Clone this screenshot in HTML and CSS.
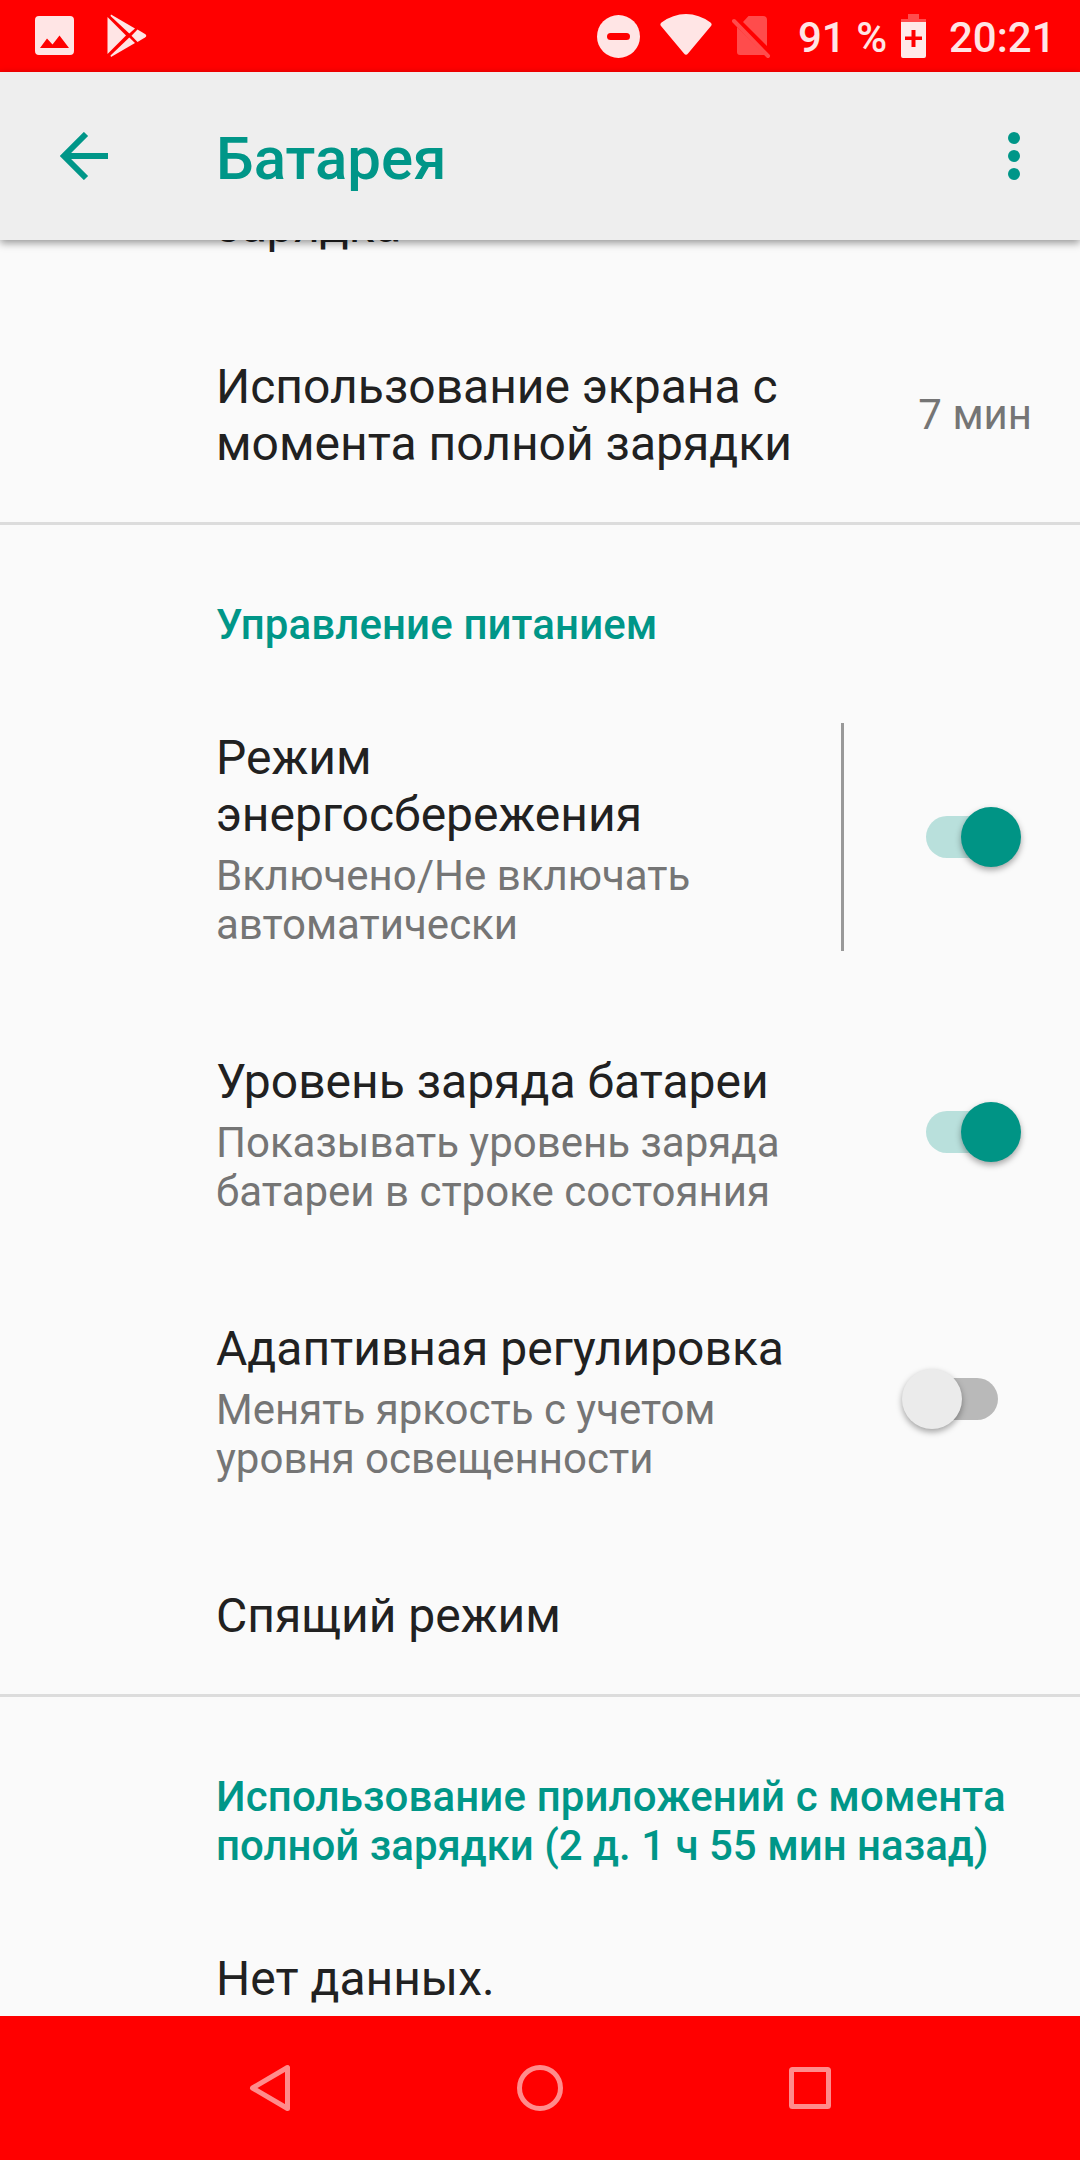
FILE: index.html
```html
<!DOCTYPE html>
<html lang="ru">
<head>
    <meta charset="utf-8">
    <title>Батарея</title>
    <link rel="stylesheet" href="styles.css">
</head>
<body>
    <div class="status-bar">
        <svg class="status-photo" width="39" height="39" viewBox="0 0 39 39">
            <path fill="#ffe5e5" fill-rule="evenodd" d="M4 0H35a4 4 0 0 1 4 4V35a4 4 0 0 1-4 4H4a4 4 0 0 1-4-4V4a4 4 0 0 1 4-4ZM5 32H34L24.500 19.500L17.500 28.500L12 22.500Z"/>
        </svg>
        <svg class="status-play" width="40" height="44" viewBox="0 0 40 44">
            <g fill="#ffe5e5">
                <path d="M.500 3L19 21.500L.500 40Z"/>
                <path d="M4 .500L28 14.500L22.300 19.500L3.500 2Z"/>
                <path d="M4 43L28 29L22.300 23.500L3.500 41.500Z"/>
                <path d="M30.500 15.500L38 20q2.500 1.500 0 3.500L30.500 28L24.500 21.800Z"/>
            </g>
        </svg>
        <svg class="status-dnd" width="43" height="43" viewBox="0 0 43 43">
            <circle cx="21.500" cy="21.500" r="21.500" fill="#ffe5e5"/>
            <rect x="10" y="18" width="23" height="7" rx="3.500" fill="#f00"/>
        </svg>
        <svg class="status-wifi" width="52" height="42" viewBox="0 0 52 42">
            <path fill="#ffe5e5" d="M1.500 8.500Q13 0 26 0T50.500 8.500Q52.500 10 51 12L28 39.500Q26 42 24 39.500L1 12Q-.500 10 1.500 8.500Z"/>
        </svg>
        <svg class="status-sim" width="40" height="44" viewBox="0 0 40 44">
            <path fill="#ff4c4c" d="M16.500 1H31q4 0 4 4V31L11 7ZM5 12L33.500 40H8q-3 0-3-3Z"/>
            <path stroke="#ff4c4c" stroke-width="4" stroke-linecap="round" d="M2 6L36 41"/>
        </svg>
        <span class="status-percent">91 %</span>
        <svg class="status-battery" width="25" height="44" viewBox="0 0 25 44">
            <path fill="#ff4c4c" d="M7 0H18V5H25V9H0V5H7Z"/>
            <path fill="#ffe9e9" fill-rule="evenodd" d="M0 8H25V42q0 2-2 2H2q-2 0-2-2ZM10.500 16V22.500H4V26H10.500V33H14.500V26H21V22.500H14.500V16Z"/>
        </svg>
        <span class="status-time">20:21</span>
    </div>

    <div class="toolbar">
        <svg class="back" width="48" height="48" viewBox="0 0 48 48">
            <path fill="none" stroke="#009688" stroke-width="6" d="M26 2L4 24L26 46M4 24H48"/>
        </svg>
        <h1>Батарея</h1>
        <svg class="more" width="12" height="48" viewBox="0 0 12 48">
            <g fill="#009688">
                <circle cx="6" cy="6" r="6"/>
                <circle cx="6" cy="24" r="6"/>
                <circle cx="6" cy="42" r="6"/>
            </g>
        </svg>
    </div>

    <div class="content">
        <div class="row row-cut">
            <div class="title">зарядка</div>
        </div>
        <div class="row row-screen">
            <div class="title">Использование экрана с<br>момента полной зарядки</div>
            <div class="value">7 мин</div>
        </div>
        <hr>
        <h2 class="category"><span class="wide">Управление питанием</span></h2>
        <div class="row row-saver">
            <div class="text">
                <div class="title">Режим<br>энергосбережения</div>
                <div class="summary">Включено/Не включать<br>автоматически</div>
            </div>
            <div class="separator"></div>
            <div class="switch on"><div class="thumb"></div></div>
        </div>
        <div class="row row-level">
            <div class="text">
                <div class="title">Уровень заряда батареи</div>
                <div class="summary">Показывать уровень заряда<br>батареи в строке состояния</div>
            </div>
            <div class="switch on"><div class="thumb"></div></div>
        </div>
        <div class="row row-adaptive">
            <div class="text">
                <div class="title">Адаптивная регулировка</div>
                <div class="summary">Менять яркость с учетом<br>уровня освещенности</div>
            </div>
            <div class="switch off"><div class="thumb"></div></div>
        </div>
        <div class="row row-sleep">
            <div class="title">Спящий режим</div>
        </div>
        <hr>
        <h2 class="category"><span class="wide">Использование приложений с момента</span><br>полной зарядки (2 д. 1 ч 55 мин назад)</h2>
        <div class="row row-empty">
            <div class="title">Нет данных.</div>
        </div>
    </div>

    <div class="nav-bar">
        <svg width="48" height="48" viewBox="0 0 48 48">
            <path fill="none" stroke="#ff8c8c" stroke-width="5" stroke-linejoin="round" d="M41.500 3.500V44.500L6.500 24Z"/>
        </svg>
        <svg width="48" height="48" viewBox="0 0 48 48">
            <circle cx="24" cy="24" r="20.500" fill="none" stroke="#ff8c8c" stroke-width="5"/>
        </svg>
        <svg width="48" height="48" viewBox="0 0 48 48">
            <rect x="5.500" y="5.500" width="37" height="37" rx="1" fill="none" stroke="#ff8c8c" stroke-width="5"/>
        </svg>
    </div>
</body>
</html>
```
FILE: styles.css
```css
* {
box-sizing: border-box;
}

body {
margin: 0;
width: 1080px;
height: 2160px;
display: flex;
flex-direction: column;
overflow: hidden;
font-family: Roboto, sans-serif;
background-color: #fafafa;
color: #212121;
}

svg {
display: block;
flex: none;
}

.status-bar {
height: 72px;
flex: none;
display: flex;
align-items: flex-start;
padding-left: 35px;
background-color: #f00;
color: #ffe5e5;
font-size: 42px;
line-height: 49px;
font-weight: 500;
white-space: nowrap;
}

.status-photo {
margin-top: 16px;
}

.status-play {
margin: 14px 0 0 33px;
}

.status-dnd {
margin: 15px 0 0 450px;
}

.status-wifi {
margin: 14px 0 0 20px;
}

.status-sim {
margin: 15px 0 0 20px;
}

.status-percent {
margin: 13px 0 0 26px;
width: 91px;
}

.status-battery {
margin: 14px 0 0 12px;
}

.status-time {
margin: 13px 0 0 23px;
}

.toolbar {
position: relative;
z-index: 2;
height: 168px;
flex: none;
display: flex;
align-items: center;
padding: 0 60px;
background-color: #eee;
box-shadow: 0 3px 8px rgba(0, 0, 0, 0.4);
}

.toolbar h1 {
margin: 5px 0 0 108px;
flex: 1;
font-size: 60px;
line-height: 70px;
font-weight: 500;
color: #009688;
}

/* list is scrolled, its first row is partly under the toolbar */
.content {
height: 1776px;
flex: none;
overflow: hidden;
}

.row {
display: flex;
align-items: center;
padding: 0 48px 0 216px;
}

.row-cut {
height: 70px;
align-items: flex-start;
}

.row-cut .title {
margin-top: -43px;
}

.row-screen {
height: 212px;
padding-bottom: 2px;
}

.row-screen .title {
flex: 1;
}

.title {
font-size: 48px;
line-height: 57px;
}

.summary {
margin-top: 8px;
font-size: 42px;
line-height: 49px;
color: #757575;
}

.value {
margin-bottom: 1px;
font-size: 42px;
line-height: 49px;
color: #757575;
}

.text {
flex: 1;
padding-top: 4px;
}

.row-level .text,
.row-adaptive .text {
padding-top: 6px;
}

hr {
margin: 0;
height: 3px;
border: none;
background-color: #dcdcdc;
}

.category {
margin: 0;
padding: 75px 48px 27px 216px;
font-size: 42px;
line-height: 49px;
font-weight: 500;
color: #009688;
white-space: nowrap;
}

.wide {
letter-spacing: 0.12px;
}

.row-saver {
height: 322px;
}

.separator {
width: 3px;
height: 228px;
margin-right: 68px;
background-color: #999;
}

.row-level,
.row-adaptive {
height: 267px;
}

.row-sleep {
height: 162px;
padding-top: 5px;
}

.row-empty {
height: 119px;
padding-top: 53px;
align-items: flex-start;
}

/* switches */
.switch {
width: 120px;
height: 60px;
flex: none;
display: flex;
align-items: center;
}

.switch::before {
content: "";
width: 72px;
height: 42px;
border-radius: 21px;
}

.switch.on {
padding-left: 14px;
}

.switch.on::before {
background-color: #b9e0dc;
}

.switch.off {
margin-right: 34px;
flex-direction: row-reverse;
}

.switch.off::before {
background-color: #b9b9b9;
}

.thumb {
width: 60px;
height: 60px;
border-radius: 50%;
box-shadow: 0 3px 6px rgba(0, 0, 0, 0.35);
z-index: 1;
}

.on .thumb {
margin-left: -37px;
background-color: #009485;
}

.off .thumb {
margin-right: -36px;
background-color: #ebebeb;
}

.nav-bar {
height: 144px;
flex: none;
display: flex;
align-items: center;
justify-content: center;
gap: 222px;
background-color: #f00;
}
```
